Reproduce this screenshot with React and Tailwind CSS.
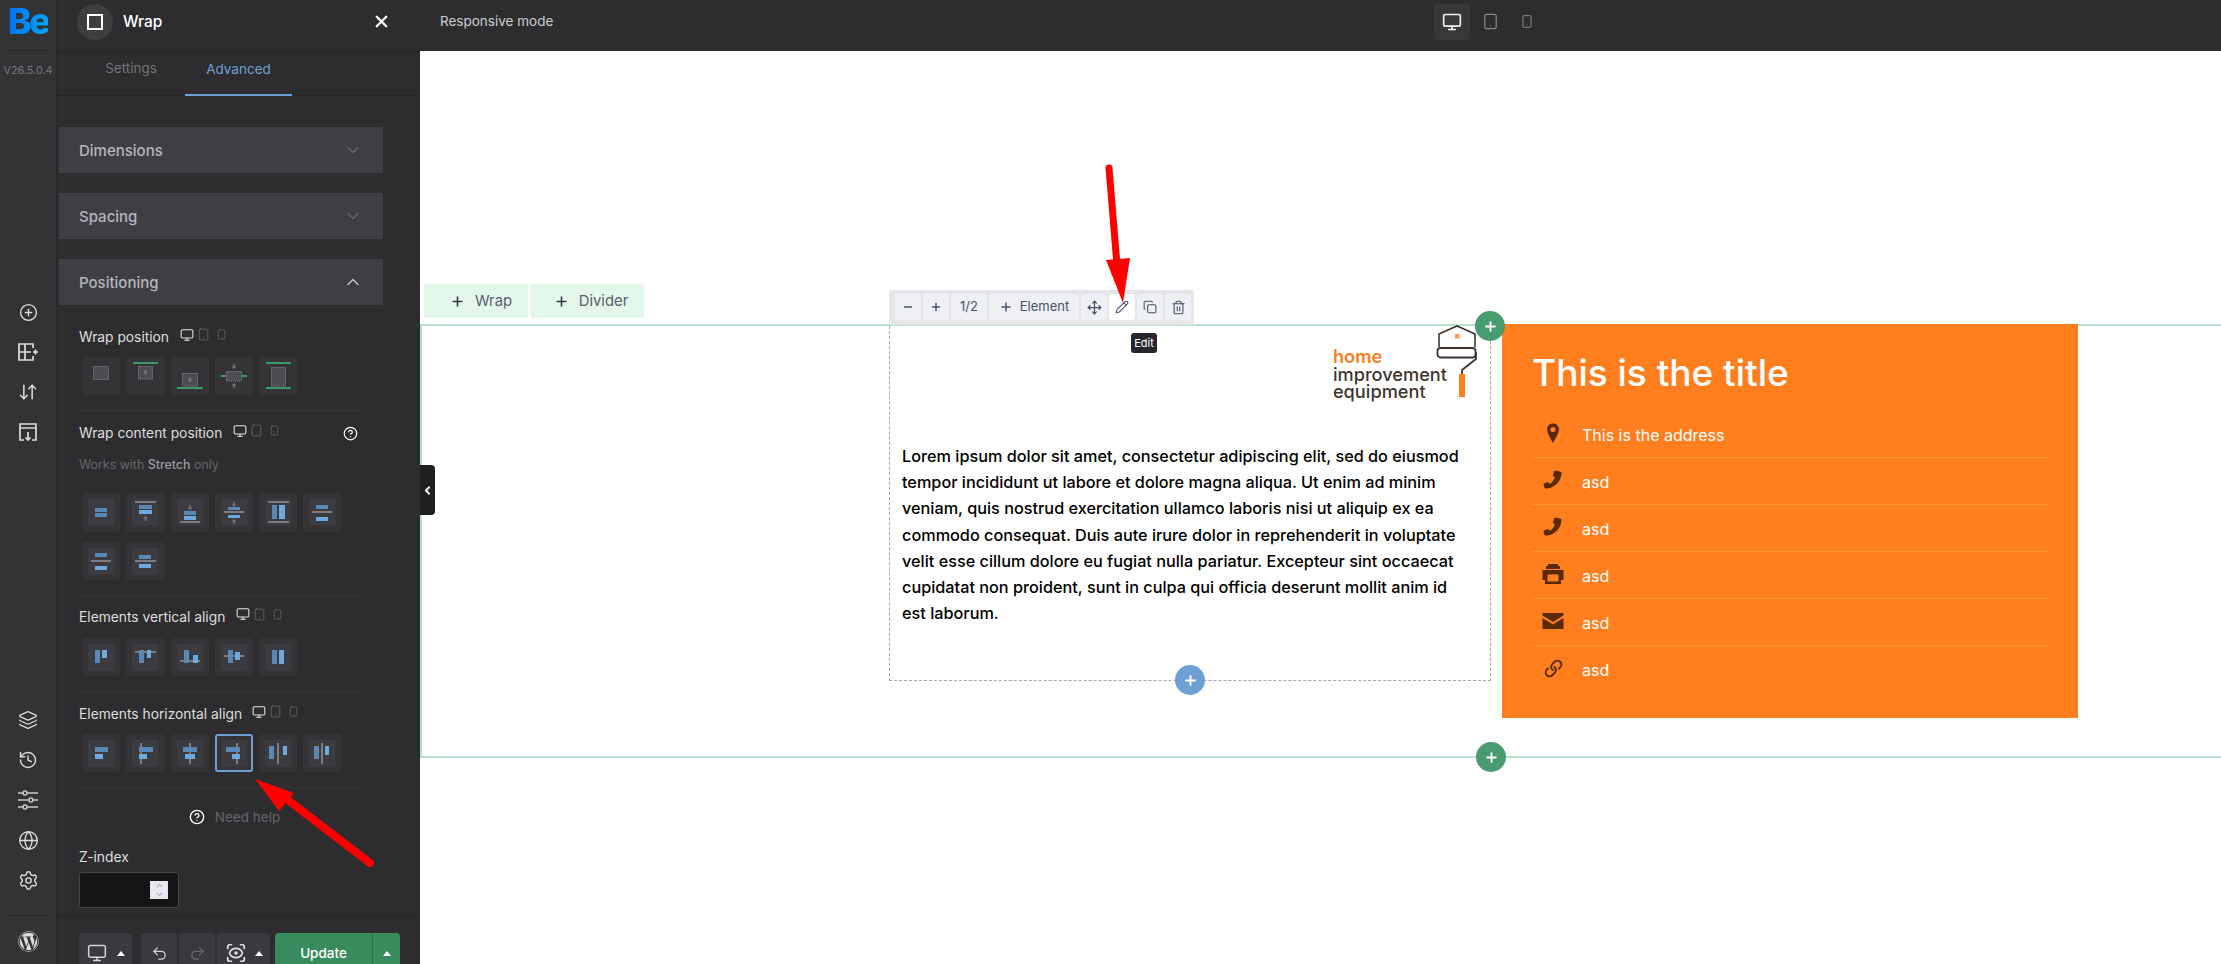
import React from "react";
import { Monitor, Tablet, Smartphone, CirclePlus, ArrowDownUp, Layers, History, Globe, Settings, CircleHelp, ChevronDown, ChevronUp, ChevronLeft, X, Undo2, Redo2, Move, Pencil, Copy, Trash2, Plus, Minus, Link as LinkIcon, ScanEye } from "lucide-react";
import { FaWordpress } from "react-icons/fa";

const D = "#5b87b5", L = "#6fa8dc", G = "#7b7b83", N = "#3c9a68";
const bar = (x, y, w, h, c) => ({ x, y, w, h, c });
const hl = (y, x1 = 9, x2 = 30, c = G) => bar(x1, y - 1, x2 - x1, 2, c);
const vl = (x, y1 = 9, y2 = 30) => bar(x - 1, y1, 2, y2 - y1, G);

function Arrow({ x, y, up }) {
  return up ? (
    <path d={`M${x} ${y}l-2.5 2.5h1.7v2.5h1.6v-2.5h1.7z`} fill="#74747b" />
  ) : (
    <path d={`M${x} ${y + 5}l-2.5 -2.5h1.7v-2.5h1.6v2.5h1.7z`} fill="#74747b" />
  );
}

function Tile({ rects = [], inner = true, selected = false, dotted, arrows = [] }) {
  return (
    <div className={`w-[38.3px] h-[38.3px] rounded-[3px] bg-[#343437] ${selected ? "border-2 border-[#6ea0d6]" : ""} relative shrink-0`}>
      <svg width="38" height="38" viewBox="0 0 38 38" className={selected ? "absolute -left-[2px] -top-[2px]" : ""}>
        {inner && <rect x="6" y="6" width="26.5" height="26.5" fill="#3b3b40" />}
        {dotted && <rect x={dotted[0]} y={dotted[1]} width={dotted[2]} height={dotted[3]} fill="#4c4c52" stroke="#85858c" strokeWidth="1" strokeDasharray="1 1" />}
        {arrows.map((a, i) => <Arrow key={i} {...a} />)}
        {rects.map((r, i) => <rect key={i} x={r.x} y={r.y} width={r.w} height={r.h} fill={r.c} />)}
      </svg>
    </div>
  );
}

const Devices = ({ className = "" }) => (
  <div className={`flex items-center ${className}`}>
    <Monitor size={14} color="#e6e6e6" strokeWidth={1.8} />
    <Tablet size={13} color="#67676c" strokeWidth={1.6} className="ml-[3px]" />
    <Smartphone size={11} color="#67676c" strokeWidth={1.6} className="ml-[6px]" />
  </div>
);

const Label = ({ children, mt, devicesGap = "ml-[11px]" }) => (
  <div className="flex items-center h-[20px] ml-[20px] text-[13.8px] text-[#dedede]" style={{ marginTop: mt }}>
    <span className="pt-[1px]">{children}</span>
    <Devices className={`${devicesGap} -mt-[5px]`} />
  </div>
);

const Divider = ({ mt }) => <div className="ml-[20px] w-[284px] border-t border-dotted border-[#414145]" style={{ marginTop: mt }} />;

const Accordion = ({ title, open }) => (
  <div className="w-[324px] h-[46px] bg-[#3e3e43] flex items-center justify-between pl-[20px] pr-[20px] text-[15px] font-medium text-[#b5b5bd]">
    <span className="pt-[2px]">{title}</span>
    {open ? <ChevronUp size={20} color="#d0d0d4" strokeWidth={1.5} /> : <ChevronDown size={20} color="#66666c" strokeWidth={1.5} />}
  </div>
);

const RailIcon = ({ children }) => <div className="h-[40px] flex items-center justify-center text-[#dcdcdc]">{children}</div>;

const AddGrid = () => (
  <svg width="20" height="18" viewBox="0 0 20 18" fill="none" stroke="#dcdcdc" strokeWidth="1.7">
    <path d="M15 5V1H1v16h14v-4M7 1v16M1 9h12M15 9h5M17.500 6.500v5" />
  </svg>
);
const SaveBox = () => (
  <svg width="18" height="18" viewBox="0 0 18 18" fill="none" stroke="#dcdcdc" strokeWidth="1.7">
    <path d="M5 17H1V1h16v16h-4M1 5h16M9 9v8M6.500 14.500L9 17l2.500-2.500" />
  </svg>
);
const Sliders = () => (
  <svg width="22" height="20" viewBox="0 0 22 20" fill="none" stroke="#c8c8c8" strokeWidth="1.5">
    <path d="M1 3h5M10 3h11M1 10h11M16 10h5M1 17h5M10 17h11" />
    <circle cx="8" cy="3" r="2" />
    <circle cx="14" cy="10" r="2" />
    <circle cx="8" cy="17" r="2" />
  </svg>
);

const phone = "M16.500 2l3.800 1c.8.2 1 1 1 1.800-.5 8.500-7.500 15.800-16 16.500-1.500.1-2.600-.5-3-1.500l-.6-2.800c-.1-.8.3-1.300 1-1.500l3-1c.7-.2 1.300 0 1.700.6l.9 1.300c2.600-1.500 4.800-4.200 5.800-7.300l-1.400-1c-.6-.4-.8-1-.6-1.700l1-3.400c.2-.6 1-1 1.400-1z";

const ContactRow = ({ icon, text, last }) => (
  <div className={`h-[47px] flex items-center ${last ? "" : "border-b border-[#ff9238]"}`}>
    <div className="w-[42px] flex justify-center -mt-[3px]">{icon}</div>
    <span className="ml-[8px] text-[16px] text-white mt-[1px]">{text}</span>
  </div>
);

const Ico = ({ children, w = 22, h = 22 }) => (
  <svg width={w} height={h} viewBox="0 0 24 24" fill="#5a2a04">{children}</svg>
);

const ToolBtn = ({ children, w, active }) => (
  <div className={`h-[26px] rounded-[3px] flex items-center justify-center text-[#48536a] text-[13px] ${active ? "bg-white" : "bg-[#eef0f3]"}`} style={{ width: w }}>
    {children}
  </div>
);

const FootBtn = ({ w, children, className = "" }) => (
  <div className={`h-[40px] rounded-t-[4px] bg-[#3a3a3e] flex items-center justify-center ${className}`} style={{ width: w }}>
    {children}
  </div>
);

const Caret = () => <span className="w-0 h-0 border-x-[4px] border-x-transparent border-b-[5px] border-b-white" />;

const PlusDot = ({ className }) => (
  <div className={`absolute w-[30px] h-[30px] rounded-full flex items-center justify-center z-20 ${className}`}>
    <Plus size={15} color="#fff" strokeWidth={3} />
  </div>
);

export default function App() {
  return (
    <div className="relative w-[2221px] h-[964px] overflow-hidden flex bg-white" style={{ fontFamily: "Inter, 'Liberation Sans', sans-serif" }}>
      {/* rail */}
      <aside className="w-[57px] h-full bg-[#333336] border-r border-[#262628] flex flex-col shrink-0">
        <div className="h-[51px] relative flex items-center justify-center">
          <span className="text-[36px] font-extrabold tracking-[-2.500px] leading-none -mt-[9px] bg-gradient-to-r from-[#0072ee] to-[#00a5ff] bg-clip-text text-transparent">Be</span>
          <div className="absolute left-[8px] right-[8px] bottom-0 border-t border-[#232325]" />
        </div>
        <div className="h-[40px] flex items-center justify-center text-[10.800px] text-[#77777c]">V26.5.0.4</div>
        <div className="h-[201px]" />
        <RailIcon><CirclePlus size={19} strokeWidth={1.7} /></RailIcon>
        <RailIcon><AddGrid /></RailIcon>
        <RailIcon><ArrowDownUp size={20} strokeWidth={1.8} /></RailIcon>
        <RailIcon><SaveBox /></RailIcon>
        <div className="h-[248px]" />
        <RailIcon><Layers size={20} strokeWidth={1.5} /></RailIcon>
        <RailIcon><History size={20} strokeWidth={1.7} /></RailIcon>
        <RailIcon><Sliders /></RailIcon>
        <RailIcon><Globe size={21} strokeWidth={1.5} /></RailIcon>
        <RailIcon><Settings size={21} strokeWidth={1.6} /></RailIcon>
        <div className="mx-[8px] mt-[15px] border-t border-[#232325]" />
        <div className="mt-[15px] flex justify-center text-[#dcdcdc]"><FaWordpress size={21} /></div>
      </aside>

      {/* panel */}
      <section className="w-[363px] h-full bg-[#2d2d2f] flex flex-col shrink-0 text-white">
        <header className="h-[52px] border-b border-[#232325] flex items-center pl-[20px] pr-[29px] pb-[8px] shrink-0">
          <div className="w-[36px] h-[36px] rounded-full bg-[#3e3e41] flex items-center justify-center">
            <div className="w-[16px] h-[16px] border-2 border-white" />
          </div>
          <span className="ml-[10px] text-[15.500px] font-medium">Wrap</span>
          <X size={19} strokeWidth={3} className="ml-auto" />
        </header>
        <div className="h-[44px] border-b border-[#232325] flex pl-[20px] text-[13.500px] shrink-0">
          <div className="w-[108px] flex items-center justify-center text-[#737378] pb-[10px]">Settings</div>
          <div className="w-[107px] flex items-center justify-center text-[#6ea0d6] border-b-2 border-[#6ea0d6] pb-[8px] -mb-[1px]">Advanced</div>
        </div>
        <div className="flex-1 pl-[2px] pt-[31px] min-h-0">
          <div className="flex flex-col gap-[20px]">
            <Accordion title="Dimensions" />
            <Accordion title="Spacing" />
            <Accordion title="Positioning" open />
          </div>
          <Label mt="22px">Wrap position</Label>
          <div className="ml-[23px] mt-[10px] flex gap-[6px]">
            <Tile inner={false} dotted={[11.500, 9.500, 15, 13]} />
            <Tile inner={false} dotted={[12.500, 9.500, 14, 12.500]} arrows={[{ x: 19.500, y: 13, up: true }]} rects={[hl(6, 7, 32, N)]} />
            <Tile inner={false} dotted={[11.500, 16.500, 15, 12.500]} arrows={[{ x: 19, y: 20 }]} rects={[hl(31, 6, 32, N)]} />
            <Tile inner={false} dotted={[11.500, 14.500, 15, 9.500]} arrows={[{ x: 19, y: 7 }, { x: 19, y: 26, up: true }]} rects={[hl(19, 6, 11, N), hl(19, 27, 32, N)]} />
            <Tile inner={false} dotted={[12.500, 10.500, 14, 18.500]} rects={[hl(6, 7, 32, N), hl(31, 7, 32, N)]} />
          </div>
          <Divider mt="15px" />
          <div className="flex items-center h-[20px] w-[284px] ml-[20px] mt-[12px] text-[13.800px] text-[#dedede]">
            <span className="pt-[1px]">Wrap content position</span>
            <Devices className="ml-[11px] -mt-[5px]" />
            <CircleHelp size={15} strokeWidth={2} className="ml-auto mr-[5px] text-white" />
          </div>
          <div className="ml-[20px] mt-[12px] h-[20px] leading-[20px] text-[12.400px] text-[#66666b]">Works with <span className="text-[#9a9a9f] font-medium">Stretch</span> only</div>
          <div className="ml-[23px] mt-[18px] w-[270px] flex flex-wrap gap-x-[6px] gap-y-[10px]">
            <Tile rects={[bar(13, 15, 12, 4, D), bar(13, 20, 12, 4, D)]} />
            <Tile arrows={[{ x: 19.500, y: 23, up: true }]} rects={[hl(9), bar(13, 12, 13, 4, D), bar(13, 17, 13, 4, L)]} />
            <Tile arrows={[{ x: 19, y: 12 }]} rects={[hl(29, 9, 29), bar(13, 18, 12, 4, D), bar(13, 23, 12, 4, L)]} />
            <Tile arrows={[{ x: 19, y: 9 }, { x: 19, y: 26, up: true }]} rects={[hl(19, 9, 29), bar(13, 14, 12, 3, D), bar(13, 22, 12, 3, L)]} />
            <Tile rects={[hl(9), hl(29), bar(13, 12, 5, 14, D), bar(20, 12, 6, 14, L)]} />
            <Tile rects={[hl(19, 9, 29), bar(13, 12, 12, 4, D), bar(13, 24, 12, 4, L)]} />
            <Tile rects={[hl(19, 9, 29), bar(13, 11, 12, 4, D), bar(13, 24, 12, 4, L)]} />
            <Tile rects={[hl(19), bar(13, 13, 12, 4, D), bar(13, 22, 12, 4, L)]} />
          </div>
          <Divider mt="16px" />
          <Label mt="10px">Elements vertical align</Label>
          <div className="ml-[23px] mt-[11px] flex gap-[6px]">
            <Tile rects={[bar(13, 12, 5, 13, D), bar(20, 12, 5, 8, L)]} />
            <Tile rects={[hl(14), bar(13, 12, 5, 13, D), bar(21, 12, 4, 8, L)]} />
            <Tile rects={[hl(23, 9, 29), bar(13, 12, 5, 13, D), bar(22, 17, 5, 8, L)]} />
            <Tile rects={[hl(18, 9, 29), bar(13, 12, 5, 13, D), bar(20, 14, 5, 8, L)]} />
            <Tile rects={[bar(13, 12, 5, 14, D), bar(20, 12, 5, 14, L)]} />
          </div>
          <Divider mt="16px" />
          <Label mt="11px" devicesGap="ml-[10px]">Elements horizontal align</Label>
          <div className="ml-[23px] mt-[10px] flex gap-[6px]">
            <Tile rects={[bar(13, 13, 13, 5, D), bar(13, 20, 8, 5, L)]} />
            <Tile rects={[vl(15), bar(13, 13, 14, 5, D), bar(13, 20, 8, 5, L)]} />
            <Tile rects={[vl(19), bar(12, 13, 14, 5, D), bar(14, 20, 10, 5, L)]} />
            <Tile selected rects={[vl(22), bar(11, 13, 14, 5, D), bar(17, 20, 8, 5, L)]} />
            <Tile rects={[vl(19), bar(10, 12, 5, 13, D), bar(24, 12, 4, 9, L)]} />
            <Tile rects={[vl(19), bar(11, 12, 5, 13, D), bar(22, 12, 4, 9, L)]} />
          </div>
          <Divider mt="15px" />
          <div className="mt-[19px] h-[20px] flex items-center justify-center pl-[2px] pr-[12px] text-[13.500px] text-[#66666b]">
            <CircleHelp size={16} strokeWidth={2} className="text-white mr-[10px]" />
            Need help
          </div>
          <div className="ml-[20px] mt-[20px] h-[20px] leading-[20px] text-[13.800px] text-[#dedede]">Z-index</div>
          <div className="ml-[20px] mt-[5px] w-[100px] h-[36px] rounded-[3px] bg-[#151516] border border-[#48484c] flex items-center justify-end pr-[10px]">
            <div className="w-[18px] h-[18px] bg-[#e8e8ee] flex flex-col items-center justify-center">
              <ChevronUp size={9} color="#8a8a90" strokeWidth={2.500} />
              <ChevronDown size={9} color="#8a8a90" strokeWidth={2.500} />
            </div>
          </div>
        </div>
        <footer className="h-[49px] border-t border-[#232325] pl-[22px] pt-[17px] flex shrink-0 overflow-hidden">
          <FootBtn w="53px" className="gap-[10px]"><Monitor size={20} color="#d6d6d6" strokeWidth={1.8} /><Caret /></FootBtn>
          <FootBtn w="36px" className="ml-[9px]"><Undo2 size={17} color="#d6d6d6" strokeWidth={1.8} /></FootBtn>
          <FootBtn w="36px" className="ml-[2px]"><Redo2 size={17} color="#69696e" strokeWidth={1.8} /></FootBtn>
          <FootBtn w="53px" className="ml-[2px] gap-[8px]">
            <ScanEye size={22} color="#e0e0e0" strokeWidth={1.9} />
            <Caret />
          </FootBtn>
          <div className="ml-[5px] w-[125px] h-[40px] rounded-t-[4px] bg-[#398a5c] flex">
            <div className="w-[98px] flex items-center justify-center text-[13.500px] font-medium text-white border-r border-[#2d6e49]">Update</div>
            <div className="flex-1 flex items-center justify-center"><Caret /></div>
          </div>
        </footer>
      </section>

      {/* right */}
      <main className="flex-1 min-w-0 flex flex-col relative">
        <div className="h-[51px] bg-[#2d2d2f] flex items-center pl-[20px] pb-[8px] shrink-0">
          <span className="w-[94px] whitespace-nowrap text-[13.500px] text-[#c9ced2]">Responsive mode</span>
          <div className="ml-[900px] flex items-center">
            <div className="w-[36px] h-[36px] rounded-[3px] bg-[#38383b] flex items-center justify-center"><Monitor size={20} color="#f0f0f0" strokeWidth={2} /></div>
            <div className="w-[22px] ml-[9px] flex justify-center"><Tablet size={17} color="#8a8a8e" strokeWidth={1.7} /></div>
            <div className="w-[14px] ml-[19px] flex justify-center"><Smartphone size={15} color="#8a8a8e" strokeWidth={1.7} /></div>
          </div>
        </div>
        <div className="flex-1 bg-white pt-[233px]">
          <div className="flex gap-[2px] pl-[4px] h-[34px] text-[14.800px] text-[#5a6270]">
            <div className="w-[104px] rounded-[3px] bg-[#e2f6ea] flex items-center justify-center gap-[10px] pl-[10px]"><Plus size={15} strokeWidth={2.500} color="#2f3b45" />Wrap</div>
            <div className="w-[114px] rounded-[3px] bg-[#e2f6ea] flex items-center justify-center gap-[10px] pl-[8px]"><Plus size={15} strokeWidth={2.500} color="#2f3b45" />Divider</div>
          </div>
          <div className="relative mt-[6px] h-[434px] border-y-2 border-l-2 border-[#b8dfca] flex items-start pl-[467px]">
            {/* collapse tab */}
            <div className="absolute -left-[2px] top-[139px] w-[15px] h-[50px] rounded-r-[4px] bg-[#1f1f21] flex items-center justify-center"><ChevronLeft size={13} color="#fff" strokeWidth={3.500} /></div>
            {/* element toolbar */}
            <div className="absolute left-[467px] -top-[36px] w-[305px] h-[35px] bg-[#e4e6ea] rounded-t-[3px] flex gap-[2px] pl-[6px] pt-[4px] z-10">
              <ToolBtn w="26px"><Minus size={12} strokeWidth={3} /></ToolBtn>
              <ToolBtn w="26px"><Plus size={12} strokeWidth={3} /></ToolBtn>
              <ToolBtn w="36px">1/2</ToolBtn>
              <ToolBtn w="90px"><Plus size={14} strokeWidth={2.500} className="mr-[7px]" />Element</ToolBtn>
              <ToolBtn w="26px"><Move size={15} strokeWidth={2} /></ToolBtn>
              <ToolBtn w="26px" active><Pencil size={14} strokeWidth={1.800} /></ToolBtn>
              <ToolBtn w="26px"><Copy size={14} strokeWidth={1.800} /></ToolBtn>
              <ToolBtn w="26px"><Trash2 size={15} strokeWidth={1.800} /></ToolBtn>
            </div>
            <div className="absolute left-[709px] top-[7px] w-[26px] h-[20px] rounded-[3px] bg-[#26262e] text-white text-[11px] flex items-center justify-center z-10">Edit</div>
            {/* dashed element */}
            <div className="relative w-[602px] h-[355px] shrink-0 border-x border-b border-dashed border-[#a8a8a8]">
              <div className="h-[117px] flex justify-end pr-[12px]">
                <div className="mt-[22px] text-[#3f352e] font-medium text-[18.200px] leading-[17.500px]">
                  <div className="text-[#ff7f1f] font-semibold">home</div>
                  <div>improvement</div>
                  <div>equipment</div>
                </div>
                <svg width="42" height="74" viewBox="0 0 42 74" fill="none" className="-ml-[11px] -mt-[1px] shrink-0">
                  <path d="M3 22V9L21 1l18 8v13" stroke="#3f352e" strokeWidth="1.600" />
                  <rect x="1.500" y="23" width="38" height="9.500" rx="3" stroke="#3f352e" strokeWidth="1.800" />
                  <path d="M40 27v7L26 45v4" stroke="#3f352e" strokeWidth="1.800" />
                  <rect x="23" y="49" width="6" height="23" fill="#ff7f1f" />
                  <rect x="19" y="9" width="4.500" height="4.500" fill="#ff9a50" />
                </svg>
              </div>
              <p className="pl-[12px] text-[16.250px] leading-[26.200px] font-[450] text-black whitespace-nowrap">
                Lorem ipsum dolor sit amet, consectetur adipiscing elit, sed do eiusmod<br />
                tempor incididunt ut labore et dolore magna aliqua. Ut enim ad minim<br />
                veniam, quis nostrud exercitation ullamco laboris nisi ut aliquip ex ea<br />
                commodo consequat. Duis aute irure dolor in reprehenderit in voluptate<br />
                velit esse cillum dolore eu fugiat nulla pariatur. Excepteur sint occaecat<br />
                cupidatat non proident, sunt in culpa qui officia deserunt mollit anim id<br />
                est laborum.
              </p>
              <PlusDot className="bg-[#6ea0d6] left-[285px] -bottom-[15px]" />
              <PlusDot className="bg-[#479b6e] -right-[15px] -top-[15px]" />
            </div>
            {/* orange */}
            <div className="ml-[11px] -mt-[2px] w-[576px] h-[394px] bg-[#ff7f1f] pl-[30px] pr-[29px] shrink-0">
              <h2 className="mt-[25px] h-[48px] leading-[48px] text-[37px] font-medium text-white">This is the title</h2>
              <div className="mt-[14px]">
                <ContactRow text="This is the address" icon={<Ico><path fillRule="evenodd" d="M12 1.500C8 1.500 5.500 4.500 5.500 8c0 4.500 6.500 15 6.500 15s6.500-10.500 6.500-15c0-3.500-2.500-6.500-6.500-6.500zm0 9.500a2.800 2.800 0 110-5.600 2.800 2.800 0 010 5.600z" /></Ico>} />
                <ContactRow text="asd" icon={<Ico><path d={phone} /></Ico>} />
                <ContactRow text="asd" icon={<Ico><path d={phone} /></Ico>} />
                <ContactRow text="asd" icon={<Ico w={24} h={24}><path fillRule="evenodd" d="M7 2h10v2h2v3H5V4h2zM1.500 8h21v10H20v4H4v-4H1.500zM6.500 12.500v7h11v-7z" /></Ico>} />
                <ContactRow text="asd" icon={<Ico w={24} h={24}><path d="M1.500 4h21v2.500L12 13 1.500 6.500zM1.500 9l10.500 6.500L22.500 9v11h-21z" /></Ico>} />
                <ContactRow last text="asd" icon={<LinkIcon size={19} color="#5a2a04" strokeWidth={2.400} className="-scale-x-100 rotate-90" />} />
              </div>
            </div>
            <PlusDot className="bg-[#479b6e] left-[1054px] -bottom-[16px]" />
          </div>
        </div>
      </main>

      {/* annotation arrows */}
      <svg className="absolute inset-0 z-50 pointer-events-none" width="2221" height="964" viewBox="0 0 2221 964">
        <path d="M1109 168L1117 265" stroke="#ff0000" strokeWidth="7" strokeLinecap="round" />
        <path d="M1106 260L1130 258L1123 303Z" fill="#ff0000" />
        <path d="M370 863L284 797" stroke="#ff0000" strokeWidth="8" strokeLinecap="round" />
        <path d="M255 779L294 793L279 811Z" fill="#ff0000" />
      </svg>
    </div>
  );
}
